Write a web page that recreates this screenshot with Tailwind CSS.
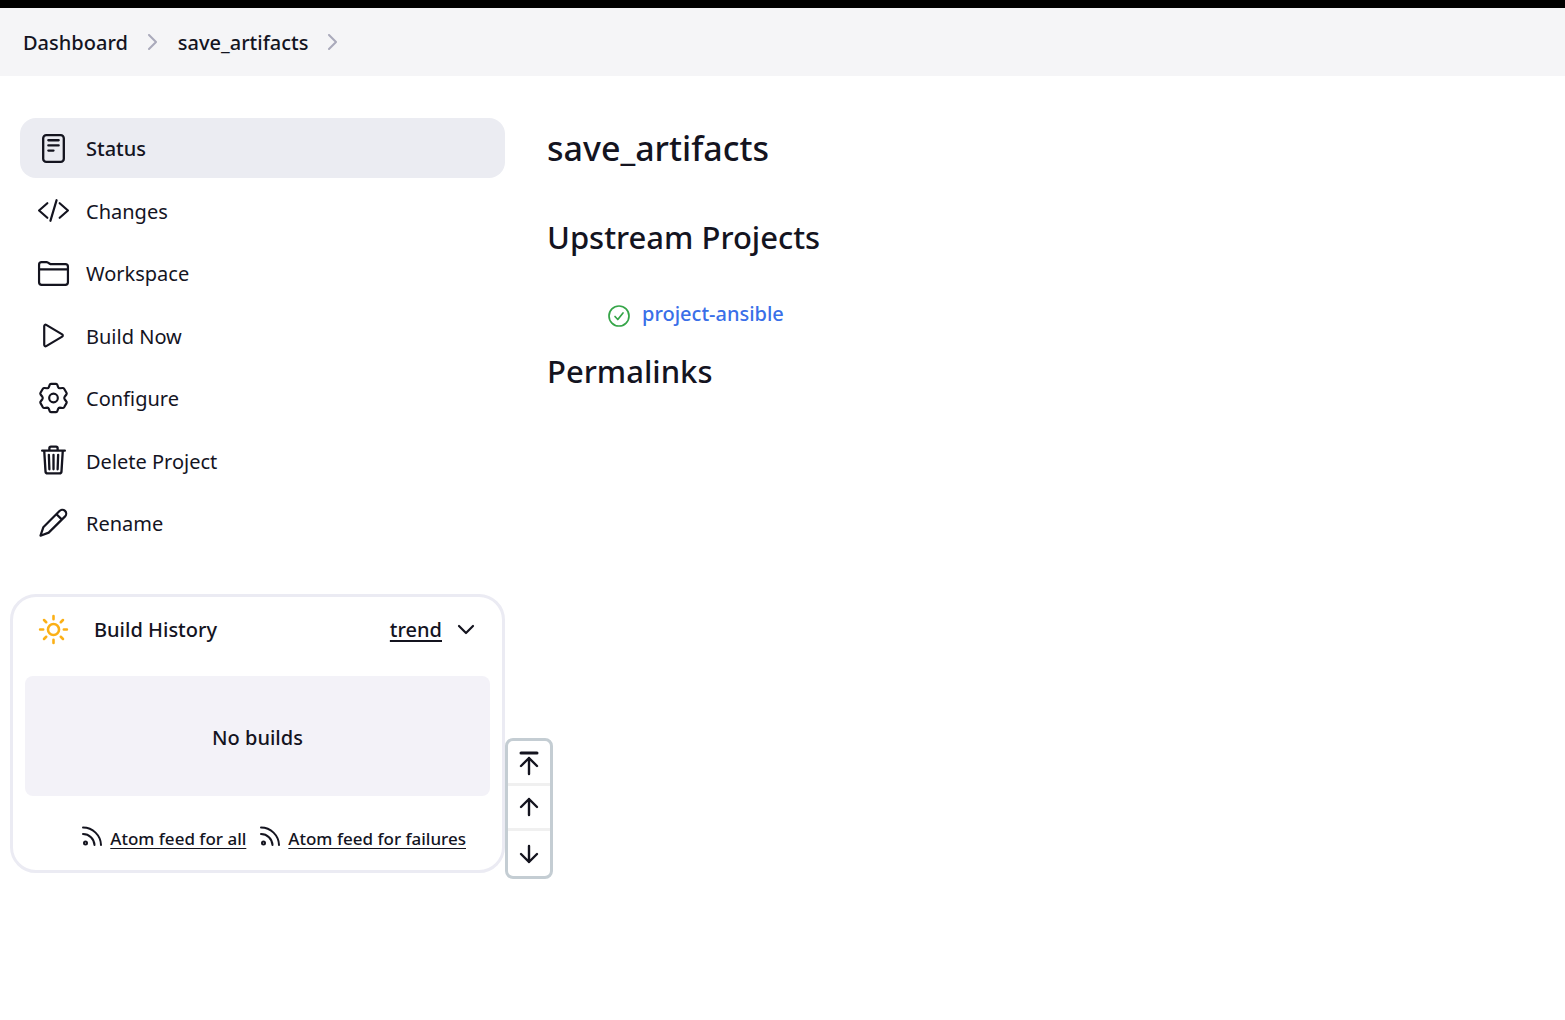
<!DOCTYPE html>
<html lang="en">
<head>
<meta charset="utf-8">
<title>save_artifacts</title>
<script src="https://cdn.jsdelivr.net/npm/@tailwindcss/browser@4"></script>
</head>
<body class="min-h-screen bg-white font-['Segoe_UI','Noto_Sans',sans-serif] text-xl text-[#14141f]">
<header class="border-t-8 border-black bg-[#f5f5f7]">
  <nav aria-label="Breadcrumb" class="flex h-[68px] items-center px-[23px] font-medium">
    <a href="#" class="pt-0.5">Dashboard</a>
    <svg class="mx-[17px] size-4" viewBox="0 0 16 16" fill="none" stroke="#aaaabb" stroke-width="2" stroke-linecap="round" stroke-linejoin="round"><path d="M4 1l7 7-7 7"/></svg>
    <a href="#" class="pt-0.5">save_artifacts</a>
    <svg class="mx-[17px] size-4" viewBox="0 0 16 16" fill="none" stroke="#aaaabb" stroke-width="2" stroke-linecap="round" stroke-linejoin="round"><path d="M4 1l7 7-7 7"/></svg>
  </nav>
</header>

<div class="flex pt-[42px]">
  <aside class="relative w-[505px] shrink-0">
    <nav aria-label="Project" class="ml-5 flex h-[435px] flex-col justify-between">
      <a href="#" aria-current="page" class="flex h-[60px] items-center gap-4 rounded-2xl bg-[#ebecf2] px-[17px] font-medium">
        <svg class="size-[33px]" viewBox="0 0 512 512" fill="none" stroke="currentColor" stroke-width="36" stroke-linecap="round" stroke-linejoin="round"><rect x="96" y="48" width="320" height="416" rx="48"/><path d="M176 128h160M176 208h160M176 288h80"/></svg>
        <span class="pt-0.5">Status</span></a>
      <a href="#" class="flex h-[60px] items-center gap-4 px-[17px]">
        <svg class="size-[33px]" viewBox="0 0 512 512" fill="none" stroke="currentColor" stroke-width="34" stroke-linecap="round" stroke-linejoin="round"><path d="M160 368L32 256l128-112M352 368l128-112-128-112M304 96l-96 320"/></svg>
        <span class="pt-0.5">Changes</span></a>
      <a href="#" class="flex h-[60px] items-center gap-4 px-[17px]">
        <svg class="size-[33px]" viewBox="0 0 512 512" fill="none" stroke="currentColor" stroke-width="34" stroke-linecap="round" stroke-linejoin="round"><path d="M440 432H72a40 40 0 01-40-40V120a40 40 0 0140-40h75.89a40 40 0 0122.19 6.72l27.84 18.56a40 40 0 0022.19 6.72H440a40 40 0 0140 40v240a40 40 0 01-40 40zM32 192h448"/></svg>
        <span class="pt-0.5">Workspace</span></a>
      <a href="#" class="flex h-[60px] items-center gap-4 px-[17px]">
        <svg class="size-[33px]" viewBox="0 0 512 512" fill="none" stroke="currentColor" stroke-width="34" stroke-linejoin="round"><path d="M112 111v290c0 17.44 17 28.52 31 20.16l247.9-148.37c12.12-7.25 12.12-26.33 0-33.58L143 90.84c-14-8.36-31 2.72-31 20.16z"/></svg>
        <span class="pt-0.5">Build Now</span></a>
      <a href="#" class="flex h-[60px] items-center gap-4 px-[17px]">
        <svg class="size-[33px]" viewBox="0.5 1 32 32" fill="none" stroke="currentColor" stroke-width="2.100" stroke-linecap="round" stroke-linejoin="round"><circle cx="16.5" cy="16.5" r="4.2"/><path d="M14 2.8h5q.9 0 1.200 .9l.8 2.300q.4 1.100 1.600 1.100l2.700-.3q1-.1 1.500 .700l2.300 4q.5.900-.1 1.600l-1.700 2.200q-.8 1.200 0 2.400l1.700 2.200q.6.700.1 1.600l-2.300 4q-.5.800-1.500.700l-2.700-.3q-1.200 0-1.600 1.100l-.8 2.300q-.3.900-1.200.9h-5q-.9 0-1.200-.9l-.8-2.300q-.4-1.100-1.600-1.100l-2.700.3q-1 .1-1.500-.7l-2.300-4q-.5-.9.100-1.600l1.700-2.200q.8-1.200 0-2.400l-1.700-2.200q-.6-.7-.1-1.600l2.300-4q.5-.8 1.500-.7l2.700.3q1.200 0 1.600-1.100l.8-2.300q.3-.9 1.200-.9z"/></svg>
        <span class="pt-0.5">Configure</span></a>
      <a href="#" class="flex h-[60px] items-center gap-4 px-[17px]">
        <svg class="size-[33px]" viewBox="0 8 512 512" fill="none" stroke="currentColor" stroke-width="36" stroke-linecap="round" stroke-linejoin="round"><path d="M112 112l20 320c.95 18.490 14.400 32 32 32h184c17.670 0 30.870-13.510 32-32l20-320M80 112h352M192 112V72a24 24 0 0124-24h80a24 24 0 0124 24v40M256 176v224M184 176l8 224M328 176l-8 224"/></svg>
        <span class="pt-0.5">Delete Project</span></a>
      <a href="#" class="flex h-[60px] items-center gap-4 px-[17px]">
        <svg class="size-[33px]" viewBox="0 0 33 33" fill="none" stroke="currentColor" stroke-width="2.200" stroke-linecap="round" stroke-linejoin="round"><path d="M3.500 28.700L6.300 20.300 22.500 4a3.700 3.700 0 015.600 5.400L11.700 25.600zM19.500 7.200l5.200 5.200"/></svg>
        <span class="pt-0.5">Rename</span></a>
    </nav>

    <section aria-label="Build History" class="mt-[41px] ml-[10px] rounded-[26px] border-3 border-[#ebebf3] px-3 pb-[18px]">
      <div class="flex h-[65px] items-center pr-[14px] pl-3">
        <svg class="size-[33px]" viewBox="0 0 512 512" fill="none" stroke="#fbb016" stroke-width="40" stroke-linecap="round"><circle cx="256" cy="256" r="86"/><path d="M256 48v48M256 416v48M403 109l-34 34M143 369l-34 34M464 256h-48M96 256H48M403 403l-34-34M143 143l-34-34"/></svg>
        <h2 class="ml-6 flex-1 font-medium">Build History</h2>
        <a href="#" class="font-medium underline decoration-2 underline-offset-3">trend</a>
        <button type="button" aria-label="Collapse" class="ml-[14px]"><svg class="size-5" viewBox="0 0 20 20" fill="none" stroke="currentColor" stroke-width="2.200" stroke-linecap="round" stroke-linejoin="round"><path d="M3 6l7 7 7-7"/></svg></button>
      </div>
      <div class="mt-[14px] flex h-[120px] items-center justify-center rounded-lg bg-[#f3f2f8] pt-1 font-medium">No builds</div>
      <div class="mt-[30px] flex justify-end gap-[14px] pr-6 text-[17px] leading-[26px] font-medium">
        <a href="#" class="flex gap-2">
          <svg class="size-5" viewBox="0 0 20 20" fill="none" stroke="currentColor" stroke-width="2" stroke-linecap="round"><circle cx="3.500" cy="17" r="1.500"/><path d="M1 1.500a18 18 0 0118 17.500M1 8a11.500 11.500 0 0111.500 11"/></svg>
          <span class="underline decoration-1 underline-offset-3">Atom feed for all</span></a>
        <a href="#" class="flex gap-2">
          <svg class="size-5" viewBox="0 0 20 20" fill="none" stroke="currentColor" stroke-width="2" stroke-linecap="round"><circle cx="3.500" cy="17" r="1.500"/><path d="M1 1.500a18 18 0 0118 17.500M1 8a11.500 11.500 0 0111.500 11"/></svg>
          <span class="underline decoration-1 underline-offset-3">Atom feed for failures</span></a>
      </div>
    </section>

    <div class="absolute -bottom-[6px] left-full flex h-[141px] w-12 flex-col divide-y-3 divide-[#f0f0f0] rounded-lg border-3 border-[#c4cdd3] bg-white">
      <button type="button" aria-label="Newest builds" class="flex h-[45px] items-center justify-center"><svg class="h-7 w-5" viewBox="0 0 20 28" fill="none" stroke="currentColor" stroke-width="2.400" stroke-linecap="round" stroke-linejoin="round"><path d="M2 5h16" stroke-width="3"/><path d="M10 26V10M2 18l8-8 8 8"/></svg></button>
      <button type="button" aria-label="Newer builds" class="flex h-[45px] items-center justify-center"><svg class="size-5" viewBox="0 0 20 20" fill="none" stroke="currentColor" stroke-width="2.400" stroke-linecap="round" stroke-linejoin="round"><path d="M10 18V2M2 10l8-8 8 8"/></svg></button>
      <button type="button" aria-label="Older builds" class="flex flex-1 items-center justify-center"><svg class="size-5" viewBox="0 0 20 20" fill="none" stroke="currentColor" stroke-width="2.400" stroke-linecap="round" stroke-linejoin="round"><path d="M10 2v16M2 10l8 8 8-8"/></svg></button>
    </div>
  </aside>

  <main class="min-w-0 flex-1 px-[42px] pt-1.5 font-medium">
    <h1 class="text-[34px] leading-12">save_artifacts</h1>
    <h2 class="mt-[41px] text-[31px] leading-12">Upstream Projects</h2>
    <ul class="mt-[37px] pl-[61px]">
      <li class="flex items-center gap-3 leading-8">
        <svg class="mt-1 size-[22px]" viewBox="0 0 22 22" fill="none" stroke="#35a548" stroke-width="1.700" stroke-linecap="round" stroke-linejoin="round"><circle cx="11" cy="11" r="10"/><path d="M7 11.500l2.800 3L15 8"/></svg>
        <a href="#" class="text-[#3a6fe8]">project-ansible</a>
      </li>
    </ul>
    <h2 class="mt-[17px] text-[31px] leading-12">Permalinks</h2>
  </main>
</div>
</body>
</html>
